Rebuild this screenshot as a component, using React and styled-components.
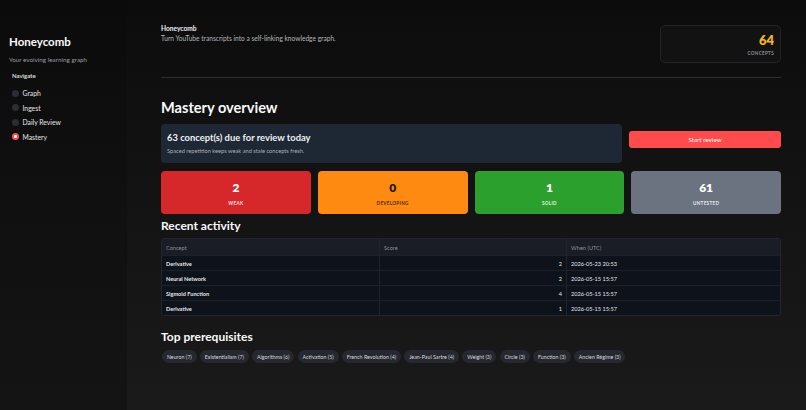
import React from 'react';
import styled, { createGlobalStyle } from 'styled-components';

const GlobalStyle = createGlobalStyle`
  html, body {
    margin: 0;
    padding: 0;
    background: #0e0e0e;
  }
  body {
    font-family: Lato, 'Noto Sans', sans-serif;
    color: #fafafa;
  }
`;

const Shell = styled.div`
  display: flex;
  width: 806px;
  height: 410px;
  overflow: hidden;
`;

const Sidebar = styled.aside`
  width: 127px;
  flex-shrink: 0;
  padding: 34px 9px 0 9px;
  box-sizing: border-box;
  background: linear-gradient(180deg, #0b0b0b 0%, #101010 50%, #141414 100%);
`;

const Brand = styled.h1`
  margin: 0;
  font-size: 11.5px;
  font-weight: 700;
  color: #fafafa;
  line-height: 15px;
`;

const Tagline = styled.p`
  margin: 7px 0 0;
  font-size: 6.3px;
  color: #9a9aa0;
`;

const NavLabel = styled.div`
  margin: 9px 0 0 3px;
  font-size: 6px;
  font-weight: 600;
  color: #e6e6e6;
`;

const NavList = styled.div`
  display: flex;
  flex-direction: column;
  gap: 5.5px;
  margin: 9.5px 0 0 3px;
`;

const NavItem = styled.div`
  display: flex;
  align-items: center;
  gap: 3.5px;
  font-size: 6.8px;
  color: #e6e6e6;
  height: 9px;
`;

const Radio = styled.span`
  width: 7px;
  height: 7px;
  border-radius: 50%;
  box-sizing: border-box;
  background: ${p => (p.$on ? '#ff4b4b' : '#2b2d34')};
  display: flex;
  align-items: center;
  justify-content: center;
  &::after {
    content: '';
    display: ${p => (p.$on ? 'block' : 'none')};
    width: 2.6px;
    height: 2.6px;
    border-radius: 50%;
    background: #fff;
  }
`;

const Main = styled.main`
  flex: 1;
  padding: 24px 25px 0 34px;
  background: linear-gradient(180deg, #0c0c0c 0%, #121212 40%, #1a1a1a 100%);
  box-sizing: border-box;
`;

const Header = styled.header`
  display: flex;
  justify-content: space-between;
  align-items: flex-start;
  padding-bottom: 14px;
  border-bottom: 1px solid #2e2e2e;
`;

const HeadText = styled.div``;

const HeadTitle = styled.div`
  font-size: 6.6px;
  font-weight: 700;
  color: #f0f2f6;
`;

const HeadSub = styled.div`
  margin-top: 2px;
  font-size: 6.6px;
  color: #b5b5ba;
`;

const CountCard = styled.div`
  width: 121px;
  height: 38px;
  margin-top: 1px;
  box-sizing: border-box;
  border: 1px solid #232323;
  border-radius: 5px;
  background: #121212;
  display: flex;
  flex-direction: column;
  align-items: flex-end;
  padding: 7px 6px 0 0;
`;

const CountValue = styled.div`
  font-size: 13px;
  font-weight: 800;
  color: #f5b41c;
  line-height: 14px;
`;

const CountLabel = styled.div`
  margin-top: 3px;
  font-size: 4.6px;
  font-weight: 700;
  letter-spacing: 0.3px;
  color: #8a8f98;
`;

const PageTitle = styled.h2`
  margin: 20px 0 0;
  font-size: 14.6px;
  font-weight: 700;
  line-height: 20px;
  color: #fafafa;
`;

const DueRow = styled.div`
  display: flex;
  gap: 7px;
  margin-top: 6px;
  align-items: flex-start;
`;

const DueBox = styled.div`
  flex: 1;
  height: 39px;
  box-sizing: border-box;
  background: #1e2834;
  border-radius: 4px;
  padding: 8px 6px 0;
`;

const DueTitle = styled.div`
  font-size: 9.4px;
  font-weight: 700;
  color: #eef0f4;
`;

const DueSub = styled.div`
  margin-top: 4px;
  font-size: 5.7px;
  color: #a8adb5;
`;

const StartButton = styled.button`
  width: 152px;
  height: 17px;
  margin-top: 7px;
  border: none;
  border-radius: 3px;
  background: #ff4b4b;
  color: #fff;
  font-family: inherit;
  font-size: 6.3px;
  padding: 0;
`;

const StatGrid = styled.div`
  display: grid;
  grid-template-columns: repeat(4, 1fr);
  gap: 7px;
  margin-top: 8px;
`;

const StatCard = styled.div`
  height: 43px;
  border-radius: 4px;
  background: ${p => p.$bg};
  display: flex;
  flex-direction: column;
  align-items: center;
  padding-top: 10px;
  box-sizing: border-box;
`;

const StatValue = styled.div`
  font-size: 12px;
  font-weight: 800;
  line-height: 14px;
  color: ${p => p.$fg};
`;

const StatLabel = styled.div`
  margin-top: 5px;
  font-size: 4.6px;
  font-weight: 700;
  letter-spacing: 0.3px;
  color: ${p => p.$fg};
  opacity: 0.85;
`;

const Section = styled.h3`
  margin: ${p => p.$top || '6px'} 0 0;
  font-size: 12px;
  font-weight: 700;
  line-height: 15px;
  color: #fafafa;
`;

const Table = styled.div`
  margin-top: 5px;
  border: 1px solid #232631;
  border-radius: 3px;
  overflow: hidden;
  background: #0f131b;
`;

const Row = styled.div`
  display: grid;
  grid-template-columns: 217px 187px 1fr;
  height: ${p => (p.$head ? '16px' : '15px')};
  background: ${p => (p.$head ? '#1a1d25' : '#0e121a')};
  border-top: ${p => (p.$first ? 'none' : '1px solid #1c2029')};
  box-sizing: border-box;
`;

const Cell = styled.div`
  display: flex;
  align-items: center;
  justify-content: ${p => (p.$right ? 'flex-end' : 'flex-start')};
  padding: 0 4px;
  font-size: 5.6px;
  color: ${p => (p.$head ? '#8c9099' : '#e4e6ea')};
  font-weight: ${p => (p.$bold ? 700 : 400)};
  border-left: ${p => (p.$sep ? '1px solid #1f232c' : 'none')};
`;

const Pills = styled.div`
  display: flex;
  flex-wrap: wrap;
  gap: 3.3px;
  margin-top: 6px;
  padding-left: 1px;
`;

const Pill = styled.span`
  height: 13px;
  padding: 0 4.9px;
  border-radius: 7px;
  background: #262830;
  color: #d6d8dd;
  font-size: 5.3px;
  display: flex;
  align-items: center;
`;

const nav = ['Graph', 'Ingest', 'Daily Review', 'Mastery'];

const stats = [
  { value: 2, label: 'WEAK', bg: '#d6282b', fg: '#ffffff' },
  { value: 0, label: 'DEVELOPING', bg: '#ff8a12', fg: '#1a1a1a' },
  { value: 1, label: 'SOLID', bg: '#2ca02c', fg: '#ffffff' },
  { value: 61, label: 'UNTESTED', bg: '#6b7280', fg: '#ffffff' },
];

const activity = [
  ['Derivative', 2, '2026-05-23 20:53'],
  ['Neural Network', 2, '2026-05-15 15:57'],
  ['Sigmoid Function', 4, '2026-05-15 15:57'],
  ['Derivative', 1, '2026-05-15 15:57'],
];

const prereqs = [
  'Neuron (7)',
  'Existentialism (7)',
  'Algorithms (6)',
  'Activation (5)',
  'French Revolution (4)',
  'Jean-Paul Sartre (4)',
  'Weight (3)',
  'Circle (3)',
  'Function (3)',
  'Ancien Régime (3)',
];

export default function App() {
  return (
    <>
      <GlobalStyle />
      <Shell>
        <Sidebar>
          <Brand>Honeycomb</Brand>
          <Tagline>Your evolving learning graph</Tagline>
          <NavLabel>Navigate</NavLabel>
          <NavList>
            {nav.map(n => (
              <NavItem key={n}>
                <Radio $on={n === 'Mastery'} />
                {n}
              </NavItem>
            ))}
          </NavList>
        </Sidebar>

        <Main>
          <Header>
            <HeadText>
              <HeadTitle>Honeycomb</HeadTitle>
              <HeadSub>Turn YouTube transcripts into a self-linking knowledge graph.</HeadSub>
            </HeadText>
            <CountCard>
              <CountValue>64</CountValue>
              <CountLabel>CONCEPTS</CountLabel>
            </CountCard>
          </Header>

          <PageTitle>Mastery overview</PageTitle>

          <DueRow>
            <DueBox>
              <DueTitle>63 concept(s) due for review today</DueTitle>
              <DueSub>Spaced repetition keeps weak and stale concepts fresh.</DueSub>
            </DueBox>
            <StartButton>Start review</StartButton>
          </DueRow>

          <StatGrid>
            {stats.map(s => (
              <StatCard key={s.label} $bg={s.bg}>
                <StatValue $fg={s.fg}>{s.value}</StatValue>
                <StatLabel $fg={s.fg}>{s.label}</StatLabel>
              </StatCard>
            ))}
          </StatGrid>

          <Section $top="4px">Recent activity</Section>
          <Table>
            <Row $head $first>
              <Cell $head>Concept</Cell>
              <Cell $head $sep>Score</Cell>
              <Cell $head $sep>When (UTC)</Cell>
            </Row>
            {activity.map((r, i) => (
              <Row key={i}>
                <Cell $bold>{r[0]}</Cell>
                <Cell $right $sep>{r[1]}</Cell>
                <Cell $sep>{r[2]}</Cell>
              </Row>
            ))}
          </Table>

          <Section $top="13px">Top prerequisites</Section>
          <Pills>
            {prereqs.map(p => (
              <Pill key={p}>{p}</Pill>
            ))}
          </Pills>
        </Main>
      </Shell>
    </>
  );
}
